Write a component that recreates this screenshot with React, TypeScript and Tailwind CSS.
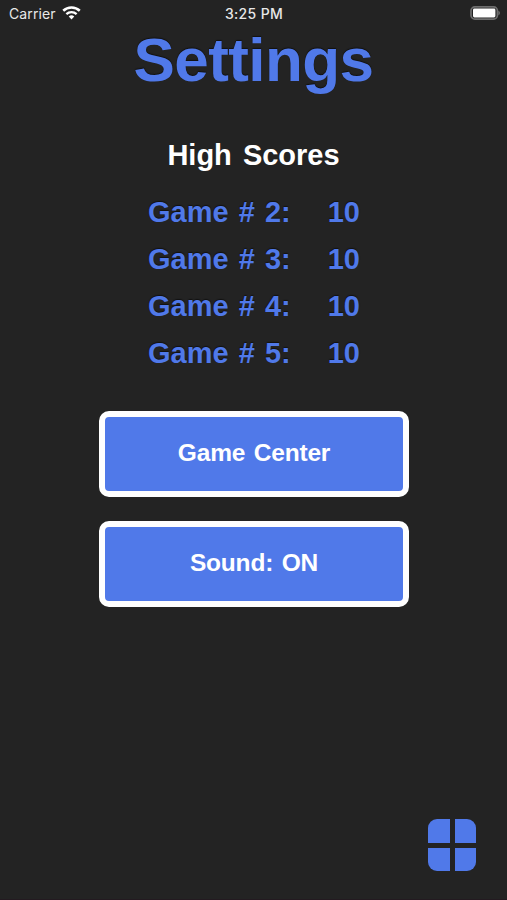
import React from 'react';

const scores = [
  { game: 2, score: 10 },
  { game: 3, score: 10 },
  { game: 4, score: 10 },
  { game: 5, score: 10 },
];

const WifiIcon = () => (
  <svg width="19" height="14" viewBox="0 0 20 14" fill="none">
    <path d="M1.3 4.6a12.6 12.6 0 0 1 17.4 0" stroke="white" strokeWidth="2.7" />
    <path d="M4.6 8.1a7.9 7.9 0 0 1 10.8 0" stroke="white" strokeWidth="2.4" />
    <path d="M10 13.8 7.1 10.7a4.3 4.3 0 0 1 5.8 0z" fill="white" />
  </svg>
);

const BatteryIcon = () => (
  <svg width="31" height="14" viewBox="0 0 31 14" fill="none">
    <rect x="1" y="0.9" width="26.4" height="12.2" rx="3.8" stroke="#6e6e6e" strokeWidth="1.7" />
    <rect x="3" y="2.6" width="22.4" height="8.8" rx="1.4" fill="white" />
    <path d="M28.3 4.8c2.2.7 2.2 3.8 0 4.5z" fill="#6e6e6e" />
  </svg>
);

const StatusBar = () => (
  <header className="grid h-[27px] grid-cols-3 items-center pl-[9px] pr-[6px] text-[14px] text-[#e8e8e8]">
    <div className="flex items-center gap-[6px] tracking-[0.1px]">
      <span>Carrier</span>
      <span className="pb-px">
        <WifiIcon />
      </span>
    </div>
    <span className="-ml-[2px] text-center font-medium tracking-[0.35px]">3:25 PM</span>
    <div className="flex justify-end pb-px">
      <BatteryIcon />
    </div>
  </header>
);

const MenuButton = ({ label }: { label: string }) => (
  <button className="h-[86px] w-[310px] rounded-[10px] border-[6px] border-white bg-[#5079e9] pb-[2px] text-[24.5px] font-bold tracking-[-0.2px] text-white [word-spacing:2px]">
    {label}
  </button>
);

const App: React.FC = () => {
  return (
    <div className="flex h-[900px] w-[507px] flex-col overflow-hidden border-b border-[#231a20] bg-[#232323] font-['Inter',sans-serif]">
      <StatusBar />
      <main className="flex flex-1 flex-col items-center font-['Liberation_Sans',sans-serif] font-bold">
        <h1 className="text-[62px] leading-[66px] tracking-[-0.6px] text-[#5079e9] [text-shadow:0_-1px_1px_#111]">Settings</h1>
        <h2 className="mt-[44px] text-[29px] leading-[36px] text-white [word-spacing:3px]">High Scores</h2>
        <ul className="mt-[16px] text-[29px] leading-[47px] text-[#5079e9] [text-shadow:0_-1px_1px_#111] [word-spacing:2px]">
          {scores.map(s => (
            <li key={s.game} className="flex gap-[37px] pl-px">
              <span>Game # {s.game}:</span>
              <span>{s.score}</span>
            </li>
          ))}
        </ul>
        <div className="mt-[34px] flex flex-col gap-6 pl-px">
          <MenuButton label="Game Center" />
          <MenuButton label="Sound: ON" />
        </div>
      </main>
      <footer className="flex justify-end pb-[28px] pr-[31px]">
        <button aria-label="Home" className="grid h-[52px] w-[48px] grid-cols-2 gap-[5px] overflow-hidden rounded-[9px]">
          <span className="bg-[#5079e9]" />
          <span className="bg-[#5079e9]" />
          <span className="bg-[#5079e9]" />
          <span className="bg-[#5079e9]" />
        </button>
      </footer>
    </div>
  );
};

export default App;
